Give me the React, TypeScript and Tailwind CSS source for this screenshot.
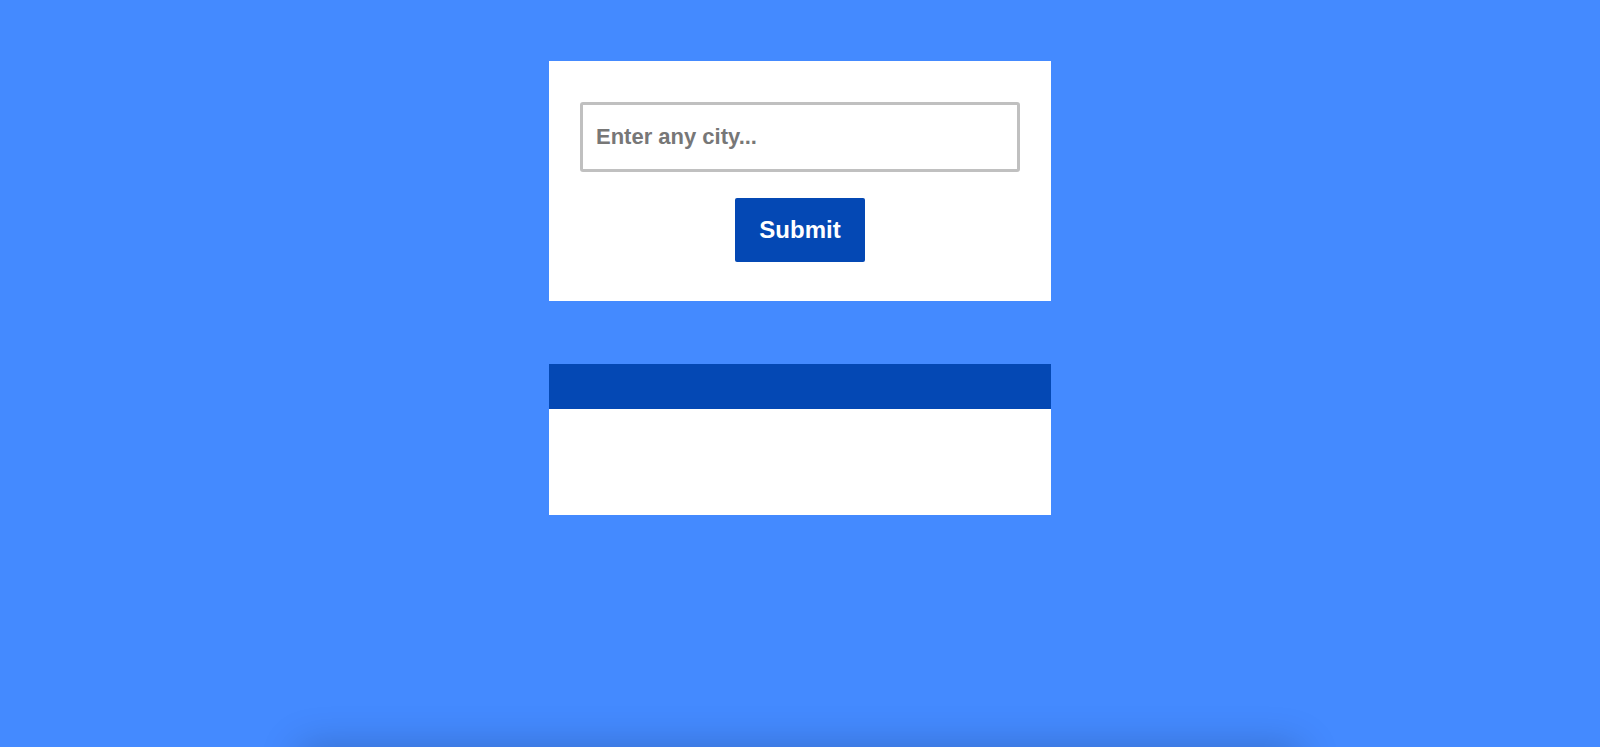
import React, { useState } from 'react';

const App: React.FC = () => {
  const [city, setCity] = useState('');

  return (
    <div
      className="h-[747px] overflow-hidden bg-[#448aff] flex flex-col items-center pt-[61px]"
      style={{ fontFamily: '"Liberation Sans", Arial, sans-serif' }}
    >
      {/* Search card */}
      <form
        onSubmit={(e) => e.preventDefault()}
        className="w-[502px] bg-white px-[31px] pt-[41px] pb-[39px] flex flex-col items-center"
      >
        <input
          type="text"
          value={city}
          onChange={(e) => setCity(e.target.value)}
          placeholder="Enter any city..."
          className="w-full h-[70px] border-[3px] border-[#c0c0c0] rounded-[3px] px-[13px] text-[22px] font-bold text-[#555] placeholder:text-[#777] outline-none"
        />
        <button
          type="submit"
          className="mt-[26px] w-[130px] h-[64px] bg-[#0448b4] text-white text-[24px] font-bold rounded-[2px]"
        >
          Submit
        </button>
      </form>

      {/* Result card */}
      <div className="mt-[63px] w-[502px]">
        <div className="h-[45px] bg-[#0448b4]" />
        <div className="h-[106px] bg-white" />
      </div>

      <div className="mt-auto mb-[-40px] h-[40px] w-[1000px] shrink-0 bg-[#448aff] shadow-[0_0_40px_rgba(0,0,0,0.22)]" />
    </div>
  );
};

export default App;
